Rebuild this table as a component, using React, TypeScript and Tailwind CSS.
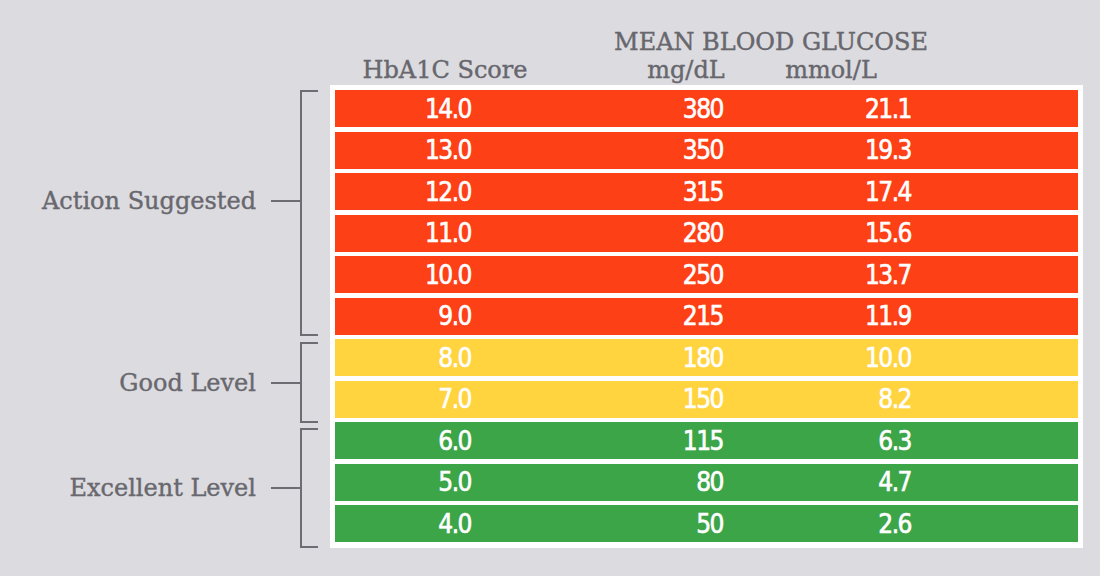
import React from "react";

type Row = { a: string; m: string; l: string; c: "r" | "y" | "g" };

const rows: Row[] = [
  { a: "14.0", m: "380", l: "21.1", c: "r" },
  { a: "13.0", m: "350", l: "19.3", c: "r" },
  { a: "12.0", m: "315", l: "17.4", c: "r" },
  { a: "11.0", m: "280", l: "15.6", c: "r" },
  { a: "10.0", m: "250", l: "13.7", c: "r" },
  { a: "9.0", m: "215", l: "11.9", c: "r" },
  { a: "8.0", m: "180", l: "10.0", c: "y" },
  { a: "7.0", m: "150", l: "8.2", c: "y" },
  { a: "6.0", m: "115", l: "6.3", c: "g" },
  { a: "5.0", m: "80", l: "4.7", c: "g" },
  { a: "4.0", m: "50", l: "2.6", c: "g" },
];

const bg: Record<Row["c"], string> = {
  r: "bg-[#fe4016]",
  y: "bg-[#ffd43f]",
  g: "bg-[#3ca548]",
};

const serif = { fontFamily: '"DejaVu Serif", "Liberation Serif", serif' };
const nums = { fontFamily: '"DejaVu Sans Condensed", "Liberation Sans", sans-serif' };

function Group({
  label,
  height,
  mt,
  shift,
}: {
  label: string;
  height: string;
  mt: string;
  shift?: string;
}) {
  return (
    <div className={`flex ${height} ${mt}`}>
      <div className={`flex flex-1 items-center justify-end ${shift ?? ""}`}>
        <span
          className="text-[24px] leading-none text-[#68686e] [-webkit-text-stroke:0.4px_#68686e]"
          style={serif}
        >
          {label}
        </span>
        <div className="ml-[15px] h-[2px] w-[29px] bg-[#6c6c72]" />
      </div>
      <div className="h-full w-[18px] border-y-2 border-l-2 border-[#6c6c72]" />
    </div>
  );
}

export default function App() {
  return (
    <div className="h-[576px] w-[1100px] overflow-hidden bg-[#dcdbe0]">
      <div
        className="pt-[28px] text-[24px] leading-[28px] text-[#67676d] [-webkit-text-stroke:0.4px_#67676d]"
        style={serif}
      >
        <div className="ml-[571px] w-[400px] text-center">MEAN BLOOD GLUCOSE</div>
        <div className="flex">
          <div className="ml-[345px] w-[200px] text-center">HbA1C Score</div>
          <div className="ml-[81px] w-[120px] text-center">mg/dL</div>
          <div className="ml-[25px] w-[120px] text-center">mmol/L</div>
        </div>
      </div>
      <div className="mt-[1px] flex">
        <div className="flex w-[330px] flex-col pr-[12px]">
          <Group label="Action Suggested" height="h-[246px]" mt="mt-[5px]" shift="pb-[24px]" />
          <Group label="Good Level" height="h-[81px]" mt="mt-[6px]" />
          <Group label="Excellent Level" height="h-[120px]" mt="mt-[5px]" />
        </div>
        <div className="flex w-[753px] flex-col gap-[4.5px] bg-white p-[5px]">
          {rows.map((r) => (
            <div
              key={r.a}
              className={`flex h-[37px] items-center text-[26px] leading-none tracking-[-1.5px] text-white [-webkit-text-stroke:0.6px_white] ${bg[r.c]}`}
              style={nums}
            >
              <div className="w-[136px] text-right">{r.a}</div>
              <div className="w-[252px] text-right">{r.m}</div>
              <div className="w-[188px] text-right">{r.l}</div>
            </div>
          ))}
        </div>
      </div>
    </div>
  );
}
